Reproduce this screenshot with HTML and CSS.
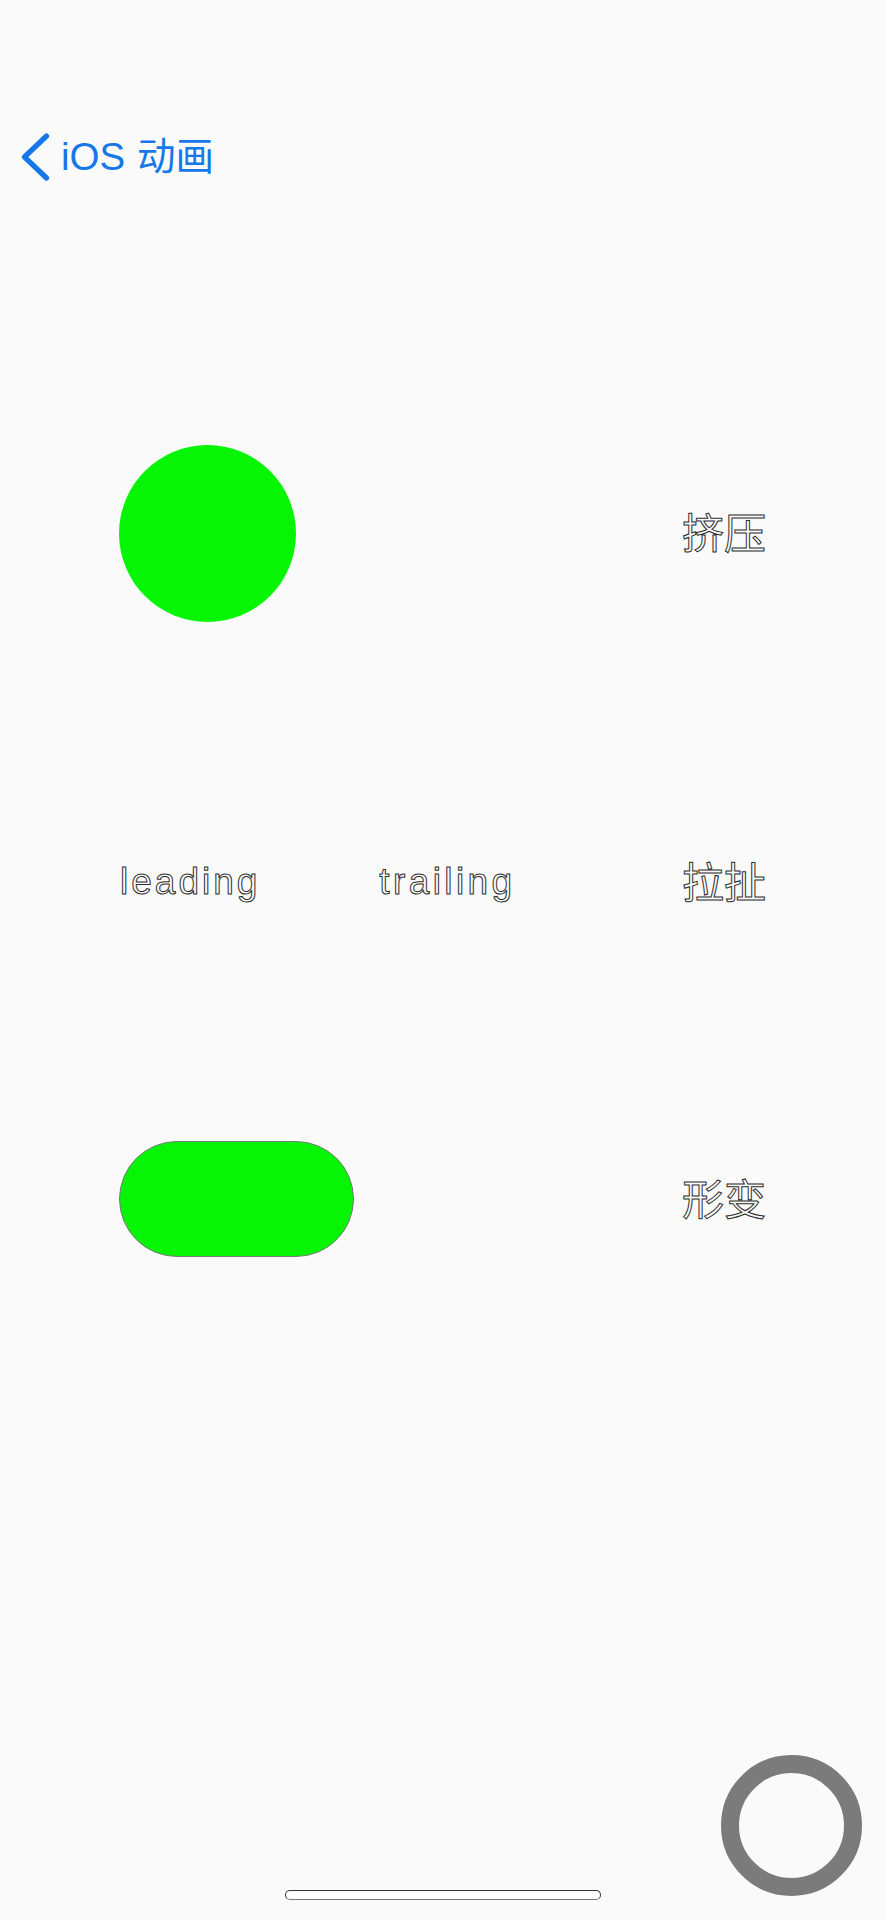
FILE: index.html
```html
<!DOCTYPE html>
<html lang="zh">
<head>
<meta charset="utf-8">
<title>iOS 动画</title>
<link rel="stylesheet" href="styles.css">
</head>
<body>
<div class="screen">
  <header class="nav">
    <svg class="chev" width="30" height="50" viewBox="0 0 30 50" aria-hidden="true">
      <path d="M26.5 4 L4.5 25 L26.5 46" fill="none" stroke="#1677e8" stroke-width="5.2" stroke-linecap="round" stroke-linejoin="round"/>
    </svg>
    <span class="nav-title">iOS 动画</span>
  </header>

  <section class="row row-squeeze">
    <div class="ball"></div>
    <span class="label">挤压</span>
  </section>

  <section class="row row-stretch">
    <div class="words">
      <span class="word">leading</span>
      <span class="word word-trailing">trailing</span>
    </div>
    <span class="label">拉扯</span>
  </section>

  <section class="row row-morph">
    <div class="pill"></div>
    <span class="label">形变</span>
  </section>

  <div class="float-btn"></div>
  <div class="home-indicator"></div>
</div>
</body>
</html>
```

FILE: styles.css
```css
html, body {
  margin: 0;
  padding: 0;
}
body {
  background: #fafafa;
  font-family: "Liberation Sans", "Noto Sans CJK SC", sans-serif;
}
.screen {
  position: relative;
  width: 886px;
  height: 1920px;
  overflow: hidden;
  background: #fafafa;
}
.nav {
  display: flex;
  align-items: center;
  height: 56px;
  margin-top: 129px;
  padding-left: 20px;
}
.chev {
  display: block;
  flex: none;
}
.nav-title {
  margin-left: 11px;
  font-size: 38.5px;
  line-height: 56px;
  word-spacing: 1px;
  color: #1677e8;
  font-family: "Liberation Sans", "Noto Sans CJK SC", sans-serif;
}
.row {
  display: flex;
  align-items: center;
  justify-content: space-between;
  padding: 0 120px 0 119px;
}
.row-squeeze {
  margin-top: 260px;
  height: 177px;
}
.row-stretch {
  margin-top: 230px;
  height: 60px;
  padding-left: 120px;
}
.row-morph {
  margin-top: 229px;
  height: 116px;
}
.ball {
  width: 177px;
  height: 177px;
  border-radius: 50%;
  background: #05f505;
}
.pill {
  box-sizing: border-box;
  width: 235px;
  height: 116px;
  border-radius: 58px;
  background: #05f505;
  border: 1.5px solid #7a7a7a;
}
.label {
  font-family: "Noto Sans CJK SC", sans-serif;
  font-size: 42px;
  line-height: 1;
  padding-bottom: 5px;
  color: #fafafa;
  -webkit-text-stroke: 1px #2e2e2e;
}
.words {
  display: flex;
  align-items: center;
  gap: 119px;
}
.word {
  font-family: "Liberation Sans", sans-serif;
  font-size: 37px;
  line-height: 60px;
  letter-spacing: 3px;
  color: #fafafa;
  -webkit-text-stroke: 1px #2e2e2e;
}
.word-trailing {
  letter-spacing: 3.4px;
}
.float-btn {
  position: absolute;
  right: 24px;
  bottom: 24px;
  box-sizing: border-box;
  width: 141px;
  height: 141px;
  border-radius: 50%;
  border: 18px solid #7b7b7b;
}
.home-indicator {
  position: absolute;
  left: 285px;
  bottom: 20px;
  box-sizing: border-box;
  width: 316px;
  height: 10px;
  border-radius: 5px;
  background: #ffffff;
  border: 1.5px solid #333333;
  border-bottom-color: #777777;
}
```
